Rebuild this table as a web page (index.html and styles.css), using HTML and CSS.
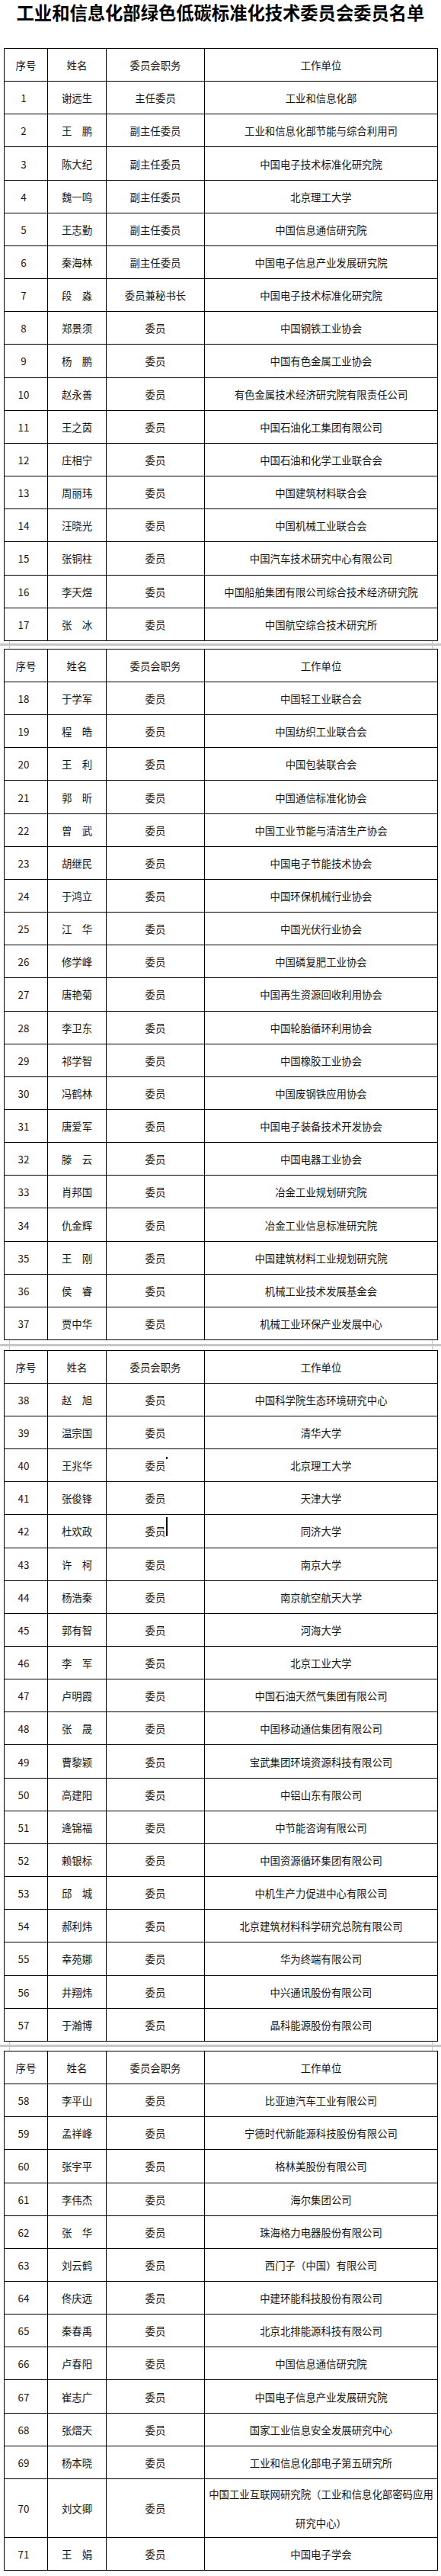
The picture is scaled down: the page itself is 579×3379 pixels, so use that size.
FILE: index.html
```html
<!DOCTYPE html>
<html lang="zh-CN">
<head>
<meta charset="utf-8">
<title>工业和信息化部绿色低碳标准化技术委员会委员名单</title>
<link rel="stylesheet" href="styles.css">
</head>
<body>
<div class="page">
  <h1 class="title">工业和信息化部绿色低碳标准化技术委员会委员名单</h1>

  <table class="sheet">
    <colgroup><col class="c1"><col class="c2"><col class="c3"><col class="c4"></colgroup>
    <tr class="head"><td>序号</td><td>姓名</td><td>委员会职务</td><td>工作单位</td></tr>
    <tr><td class="num">1</td><td>谢远生</td><td>主任委员</td><td>工业和信息化部</td></tr>
    <tr><td class="num">2</td><td>王　鹏</td><td>副主任委员</td><td>工业和信息化部节能与综合利用司</td></tr>
    <tr><td class="num">3</td><td>陈大纪</td><td>副主任委员</td><td>中国电子技术标准化研究院</td></tr>
    <tr><td class="num">4</td><td>魏一鸣</td><td>副主任委员</td><td>北京理工大学</td></tr>
    <tr><td class="num">5</td><td>王志勤</td><td>副主任委员</td><td>中国信息通信研究院</td></tr>
    <tr><td class="num">6</td><td>秦海林</td><td>副主任委员</td><td>中国电子信息产业发展研究院</td></tr>
    <tr><td class="num">7</td><td>段　淼</td><td>委员兼秘书长</td><td>中国电子技术标准化研究院</td></tr>
    <tr><td class="num">8</td><td>郑景须</td><td>委员</td><td>中国钢铁工业协会</td></tr>
    <tr><td class="num">9</td><td>杨　鹏</td><td>委员</td><td>中国有色金属工业协会</td></tr>
    <tr><td class="num">10</td><td>赵永善</td><td>委员</td><td>有色金属技术经济研究院有限责任公司</td></tr>
    <tr><td class="num">11</td><td>王之茵</td><td>委员</td><td>中国石油化工集团有限公司</td></tr>
    <tr><td class="num">12</td><td>庄相宁</td><td>委员</td><td>中国石油和化学工业联合会</td></tr>
    <tr><td class="num">13</td><td>周丽玮</td><td>委员</td><td>中国建筑材料联合会</td></tr>
    <tr><td class="num">14</td><td>汪晓光</td><td>委员</td><td>中国机械工业联合会</td></tr>
    <tr><td class="num">15</td><td>张铜柱</td><td>委员</td><td>中国汽车技术研究中心有限公司</td></tr>
    <tr><td class="num">16</td><td>李天煜</td><td>委员</td><td>中国船舶集团有限公司综合技术经济研究院</td></tr>
    <tr><td class="num">17</td><td>张　冰</td><td>委员</td><td>中国航空综合技术研究所</td></tr>
  </table>

  <div class="sep sep-a"><div class="band"></div></div>

  <table class="sheet">
    <colgroup><col class="c1"><col class="c2"><col class="c3"><col class="c4"></colgroup>
    <tr class="head"><td>序号</td><td>姓名</td><td>委员会职务</td><td>工作单位</td></tr>
    <tr><td class="num">18</td><td>于学军</td><td>委员</td><td>中国轻工业联合会</td></tr>
    <tr><td class="num">19</td><td>程　皓</td><td>委员</td><td>中国纺织工业联合会</td></tr>
    <tr><td class="num">20</td><td>王　利</td><td>委员</td><td>中国包装联合会</td></tr>
    <tr><td class="num">21</td><td>郭　昕</td><td>委员</td><td>中国通信标准化协会</td></tr>
    <tr><td class="num">22</td><td>曾　武</td><td>委员</td><td>中国工业节能与清洁生产协会</td></tr>
    <tr><td class="num">23</td><td>胡继民</td><td>委员</td><td>中国电子节能技术协会</td></tr>
    <tr><td class="num">24</td><td>于鸿立</td><td>委员</td><td>中国环保机械行业协会</td></tr>
    <tr><td class="num">25</td><td>江　华</td><td>委员</td><td>中国光伏行业协会</td></tr>
    <tr><td class="num">26</td><td>修学峰</td><td>委员</td><td>中国磷复肥工业协会</td></tr>
    <tr><td class="num">27</td><td>唐艳菊</td><td>委员</td><td>中国再生资源回收利用协会</td></tr>
    <tr><td class="num">28</td><td>李卫东</td><td>委员</td><td>中国轮胎循环利用协会</td></tr>
    <tr><td class="num">29</td><td>祁学智</td><td>委员</td><td>中国橡胶工业协会</td></tr>
    <tr><td class="num">30</td><td>冯鹤林</td><td>委员</td><td>中国废钢铁应用协会</td></tr>
    <tr><td class="num">31</td><td>唐爱军</td><td>委员</td><td>中国电子装备技术开发协会</td></tr>
    <tr><td class="num">32</td><td>滕　云</td><td>委员</td><td>中国电器工业协会</td></tr>
    <tr><td class="num">33</td><td>肖邦国</td><td>委员</td><td>冶金工业规划研究院</td></tr>
    <tr><td class="num">34</td><td>仇金辉</td><td>委员</td><td>冶金工业信息标准研究院</td></tr>
    <tr><td class="num">35</td><td>王　刚</td><td>委员</td><td>中国建筑材料工业规划研究院</td></tr>
    <tr><td class="num">36</td><td>侯　睿</td><td>委员</td><td>机械工业技术发展基金会</td></tr>
    <tr><td class="num">37</td><td>贾中华</td><td>委员</td><td>机械工业环保产业发展中心</td></tr>
  </table>

  <div class="sep sep-b"><div class="band"></div></div>

  <table class="sheet">
    <colgroup><col class="c1"><col class="c2"><col class="c3"><col class="c4"></colgroup>
    <tr class="head"><td>序号</td><td>姓名</td><td>委员会职务</td><td>工作单位</td></tr>
    <tr><td class="num">38</td><td>赵　旭</td><td>委员</td><td>中国科学院生态环境研究中心</td></tr>
    <tr><td class="num">39</td><td>温宗国</td><td>委员</td><td>清华大学</td></tr>
    <tr><td class="num">40</td><td>王兆华</td><td class="mark">委员<span class="caret caret-short"></span></td><td>北京理工大学</td></tr>
    <tr><td class="num">41</td><td>张俊锋</td><td>委员</td><td>天津大学</td></tr>
    <tr><td class="num">42</td><td>杜欢政</td><td class="mark">委员<span class="caret caret-long"></span></td><td>同济大学</td></tr>
    <tr><td class="num">43</td><td>许　柯</td><td>委员</td><td>南京大学</td></tr>
    <tr><td class="num">44</td><td>杨浩秦</td><td>委员</td><td>南京航空航天大学</td></tr>
    <tr><td class="num">45</td><td>郭有智</td><td>委员</td><td>河海大学</td></tr>
    <tr><td class="num">46</td><td>李　军</td><td>委员</td><td>北京工业大学</td></tr>
    <tr><td class="num">47</td><td>卢明霞</td><td>委员</td><td>中国石油天然气集团有限公司</td></tr>
    <tr><td class="num">48</td><td>张　晟</td><td>委员</td><td>中国移动通信集团有限公司</td></tr>
    <tr><td class="num">49</td><td>曹黎颖</td><td>委员</td><td>宝武集团环境资源科技有限公司</td></tr>
    <tr><td class="num">50</td><td>高建阳</td><td>委员</td><td>中铝山东有限公司</td></tr>
    <tr><td class="num">51</td><td>逄锦福</td><td>委员</td><td>中节能咨询有限公司</td></tr>
    <tr><td class="num">52</td><td>赖银标</td><td>委员</td><td>中国资源循环集团有限公司</td></tr>
    <tr><td class="num">53</td><td>邱　城</td><td>委员</td><td>中机生产力促进中心有限公司</td></tr>
    <tr><td class="num">54</td><td>郝利炜</td><td>委员</td><td>北京建筑材料科学研究总院有限公司</td></tr>
    <tr><td class="num">55</td><td>幸苑娜</td><td>委员</td><td>华为终端有限公司</td></tr>
    <tr><td class="num">56</td><td>井翔炜</td><td>委员</td><td>中兴通讯股份有限公司</td></tr>
    <tr><td class="num">57</td><td>于瀚博</td><td>委员</td><td>晶科能源股份有限公司</td></tr>
  </table>

  <div class="sep sep-c"><div class="band"></div></div>

  <table class="sheet">
    <colgroup><col class="c1"><col class="c2"><col class="c3"><col class="c4"></colgroup>
    <tr class="head"><td>序号</td><td>姓名</td><td>委员会职务</td><td>工作单位</td></tr>
    <tr><td class="num">58</td><td>李平山</td><td>委员</td><td>比亚迪汽车工业有限公司</td></tr>
    <tr><td class="num">59</td><td>孟祥峰</td><td>委员</td><td>宁德时代新能源科技股份有限公司</td></tr>
    <tr><td class="num">60</td><td>张宇平</td><td>委员</td><td>格林美股份有限公司</td></tr>
    <tr><td class="num">61</td><td>李伟杰</td><td>委员</td><td>海尔集团公司</td></tr>
    <tr><td class="num">62</td><td>张　华</td><td>委员</td><td>珠海格力电器股份有限公司</td></tr>
    <tr><td class="num">63</td><td>刘云鹤</td><td>委员</td><td>西门子（中国）有限公司</td></tr>
    <tr><td class="num">64</td><td>佟庆远</td><td>委员</td><td>中建环能科技股份有限公司</td></tr>
    <tr><td class="num">65</td><td>秦春禹</td><td>委员</td><td>北京北排能源科技有限公司</td></tr>
    <tr><td class="num">66</td><td>卢春阳</td><td>委员</td><td>中国信息通信研究院</td></tr>
    <tr><td class="num">67</td><td>崔志广</td><td>委员</td><td>中国电子信息产业发展研究院</td></tr>
    <tr><td class="num">68</td><td>张熠天</td><td>委员</td><td>国家工业信息安全发展研究中心</td></tr>
    <tr><td class="num">69</td><td>杨本晓</td><td>委员</td><td>工业和信息化部电子第五研究所</td></tr>
    <tr class="tall"><td class="num">70</td><td>刘文卿</td><td>委员</td><td class="wrap">中国工业互联网研究院（工业和信息化部密码应用<br>研究中心）</td></tr>
    <tr><td class="num">71</td><td>王　娟</td><td>委员</td><td>中国电子学会</td></tr>
  </table>
</div>
</body>
</html>
```

FILE: styles.css
```css
html, body {
  margin: 0;
  padding: 0;
  background: #ffffff;
}

body {
  font-family: "Noto Sans CJK SC", "Noto Sans", sans-serif;
  color: #161616;
}

.page {
  width: 579px;
}

.title {
  margin: 0;
  height: 63px;
  font-size: 23.3px;
  font-weight: 700;
  line-height: 33px;
  text-align: center;
  color: #000000;
  white-space: nowrap;
}

.sheet {
  margin-left: 5px;
  width: 570px;
  table-layout: fixed;
  border-collapse: separate;
  border-spacing: 0;
  border-top: 1px solid #000000;
  border-left: 1px solid #000000;
}

.c1 { width: 57px; }
.c2 { width: 77px; }
.c3 { width: 129px; }
.c4 { width: 306px; }

.sheet td {
  box-sizing: border-box;
  height: 43.17px;
  padding: 0;
  border-right: 1px solid #000000;
  border-bottom: 1px solid #000000;
  text-align: center;
  vertical-align: middle;
  font-size: 13.4px;
  line-height: 20px;
  white-space: nowrap;
}

.sheet td.num {
  padding-right: 6px;
}

.sheet tr.tall td {
  height: 77px;
}

.sheet td.wrap {
  line-height: 38px;
  padding: 0 2px;
}

.sheet td.mark {
  position: relative;
}

.caret {
  position: absolute;
  left: 78px;
  width: 2px;
  background: #000000;
}

.caret-short {
  top: 10px;
  height: 3px;
}

.caret-long {
  top: 3px;
  height: 25px;
}

.sep {
  position: relative;
  display: flex;
  align-items: center;
}

.sep-a { height: 10px; }
.sep-b { height: 12.5px; }
.sep-c { height: 12px; }

.band {
  width: 100%;
  height: 3px;
  background: #c6c6c6;
}

.sep::before,
.sep::after {
  content: "";
  position: absolute;
  top: 0;
  bottom: 0;
  width: 1px;
  background: #c6c6c6;
}

.sep::before { left: 12px; }
.sep::after { left: 567px; }
```
